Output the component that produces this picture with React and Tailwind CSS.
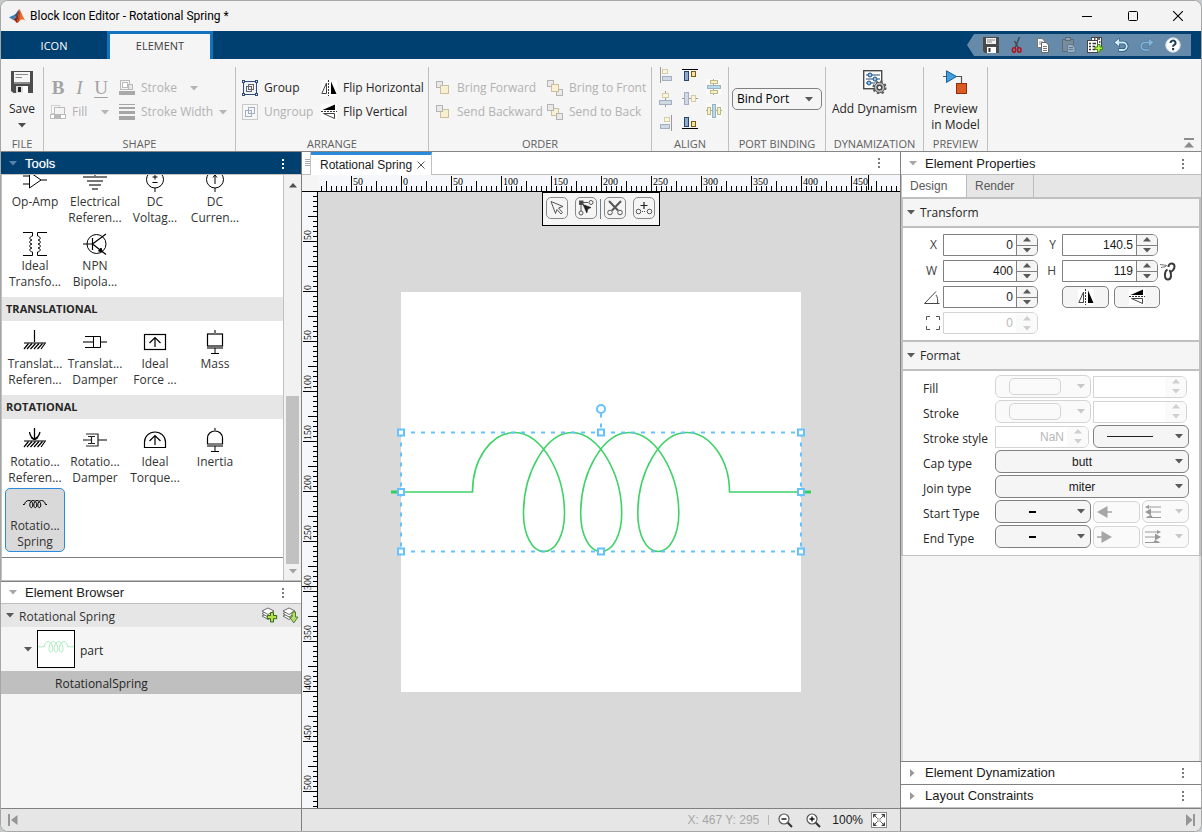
import React, { useLayoutEffect, useRef, useState } from "react";

const SEGOE = "font-['Open_Sans','Noto_Sans',sans-serif]";
const ARIAL = "font-['Liberation_Sans',Arial,sans-serif]";

/* ---------- small shared pieces ---------- */

function Tri({ dir = "down", className = "text-[#595959]" }) {
  const d = {
    down: "M0 0H8L4 4.5Z",
    up: "M0 4.5H8L4 0Z",
    right: "M0 0L4.5 4L0 8Z",
  }[dir];
  const box = dir === "right" ? { w: 5, h: 8 } : { w: 8, h: 5 };
  return (
    <svg width={box.w} height={box.h} className={`shrink-0 ${className}`} aria-hidden="true">
      <path d={d} fill="currentColor" />
    </svg>
  );
}

function Dots({ className = "text-[#7a7a7a]", label }) {
  return (
    <button type="button" aria-label={label} className={`flex h-4 w-4 items-center justify-center ${className}`}>
      <svg width="2" height="10" fill="currentColor" aria-hidden="true">
        <rect width="2" height="2" />
        <rect y="4" width="2" height="2" />
        <rect y="8" width="2" height="2" />
      </svg>
    </button>
  );
}

function FlipH({ size = 16 }) {
  return (
    <svg width={size} height={size} viewBox="0 0 16 16" aria-hidden="true">
      <rect width="16" height="16" fill="#fff" />
      <path d="M5.5 3V13.5H0.8Z" fill="#fff" stroke="#444" />
      <path d="M7.5 0V16" stroke="#333" strokeDasharray="2 1" />
      <path d="M10 1.5V14H15.5Z" fill="#000" />
    </svg>
  );
}

function FlipV({ size = 16 }) {
  return (
    <svg width={size} height={size} viewBox="0 0 16 16" aria-hidden="true">
      <rect width="16" height="16" fill="#fff" />
      <path d="M14 0.5V6H1.5Z" fill="#000" />
      <path d="M0 7.5H16" stroke="#333" strokeDasharray="2 1" />
      <path d="M13.500 9.500V14.500L2.500 9.500Z" fill="#fff" stroke="#444" />
    </svg>
  );
}

/* ---------- title bar ---------- */

function TitleBar() {
  return (
    <header className="flex h-[30px] shrink-0 items-center bg-[#f3f3f3] pl-[8px] pr-px">
      <svg width="17" height="16" viewBox="0 0 17 16" aria-hidden="true">
        <path d="M0 9.2L5 7L7.2 9.2L4.2 12Z" fill="#3f7fb5" />
        <path d="M5 7C7 6.4 8 4 9.6 1.5L8.4 8.6L7.2 9.2Z" fill="#27598f" />
        <path d="M4.2 12L7.2 9.2C8.6 7 9.4 2.6 10.2 1C10.4 4 9.4 11 7.6 15C6.6 13 5.6 12 4.2 12Z" fill="#8c2516" />
        <path d="M10.2 1C12 2.4 13.6 9 16.4 12.8C14 11 12 11.4 10.6 13C9.6 14.2 8.6 15 7.6 15C9.6 11 10 5 10.2 1Z" fill="#e5702a" />
        <path d="M10.2 1C10.9 4 11.2 8 10.2 12.6C9.4 14 8.4 15 7.6 15C9.6 11 10 5 10.2 1Z" fill="#c13c1a" />
      </svg>
      <h1 className="ml-[4px] flex-1 font-[Roboto,sans-serif] text-[12px] leading-4 text-black">Block Icon Editor - Rotational Spring *</h1>
      <div className="flex">
        <button type="button" aria-label="Minimize" className="flex h-[30px] w-[46px] items-center justify-center">
          <svg width="10" height="10"><path d="M0 5.500H10" stroke="#000" /></svg>
        </button>
        <button type="button" aria-label="Maximize" className="flex h-[30px] w-[45px] items-center justify-center">
          <svg width="10" height="10"><rect x=".5" y=".5" width="9" height="9" rx="1" fill="none" stroke="#000" /></svg>
        </button>
        <button type="button" aria-label="Close" className="flex h-[30px] w-[45px] items-center justify-center">
          <svg width="10" height="10"><path d="M0 0L10 10M10 0L0 10" stroke="#000" strokeWidth="1.1" /></svg>
        </button>
      </div>
    </header>
  );
}

/* ---------- tab strip with quick access ---------- */

const QUICK = [
  ["Save", (
    <svg width="16" height="16" viewBox="0 0 16 16">
      <path d="M0 0H16V16H2L0 14Z" fill="#4a4a4a" />
      <rect x="3" y="1" width="10" height="6" fill="#f2f2f2" />
      <path d="M4 3H12M4 5H9" stroke="#888" />
      <rect x="4" y="10" width="9" height="6" fill="#fff" />
      <rect x="5.500" y="11" width="2" height="4" fill="#333" />
    </svg>
  )],
  ["Cut", (
    <svg width="16" height="16" viewBox="0 0 16 16">
      <path d="M10.500 0L6 11M5.500 4L9.500 11" stroke="#3f4c56" strokeWidth="1.500" />
      <ellipse cx="5" cy="13" rx="1.700" ry="2.200" fill="none" stroke="#b3121d" strokeWidth="1.500" />
      <ellipse cx="10.300" cy="13" rx="1.700" ry="2.200" fill="none" stroke="#b3121d" strokeWidth="1.500" />
    </svg>
  )],
  ["Copy", (
    <svg width="16" height="16" viewBox="0 0 16 16">
      <path d="M2.500 1.500H7L9.500 4V10.500H2.500Z" fill="#fff" stroke="#777" />
      <path d="M4 5H8M4 7H8" stroke="#8a8a8a" />
      <path d="M6.500 5.500H11L13.500 8V15.500H6.500Z" fill="#fff" stroke="#666" />
      <path d="M8 9.500H12M8 11.500H12M8 13.500H12" stroke="#777" />
    </svg>
  )],
  ["Paste", (
    <svg width="16" height="16" viewBox="0 0 16 16" opacity=".75">
      <rect x="1.500" y="2.500" width="11" height="12" fill="#7f8d97" stroke="#56636d" />
      <rect x="4.500" y=".5" width="5" height="3" fill="#9fabb4" stroke="#56636d" />
      <path d="M6.500 7.500H11L14 10V15.500H6.500Z" fill="#a9bccc" stroke="#5f7486" />
      <path d="M8 10.500H12M8 12.500H12" stroke="#5f7486" />
    </svg>
  )],
  ["Customize quick access", (
    <svg width="16" height="16" viewBox="0 0 16 16">
      <rect x="4.500" y=".5" width="10" height="11" fill="#fff" stroke="#444" />
      <rect x=".5" y="3.500" width="10" height="12" fill="#fff" stroke="#444" />
      <path d="M2 6.500H4M5.500 6.500H9M2 9.500H4M5.500 9.500H8M2 12.500H4M5.500 12.500H8M7 2H8.500M10 2H13M12 5H13.500" stroke="#333" strokeWidth="1.500" />
      <path d="M10.500 7.500H13V10H15.500V12.500H13V15H10.500V12.500H8V10H10.500Z" fill="#b8ef3c" stroke="#3d8a12" />
    </svg>
  )],
  ["Undo", (
    <svg width="16" height="16" viewBox="0 0 16 16">
      <path d="M3 5.500H10A3.700 3.700 0 0 1 10 13H5.500" fill="none" stroke="#27577d" strokeWidth="3.500" />
      <path d="M6.500 1L1 5.500L6.500 10Z" fill="#d5ecfb" stroke="#27577d" strokeWidth=".7" />
      <path d="M4 5.500H10A3.700 3.700 0 0 1 10 13H6" fill="none" stroke="#cfe8fa" strokeWidth="1.800" />
    </svg>
  )],
  ["Redo", (
    <svg width="16" height="16" viewBox="0 0 16 16">
      <path d="M12 5.500H6A3.700 3.700 0 0 0 6 13H10" fill="none" stroke="#4a7ba3" strokeWidth="3" />
      <path d="M9.500 1L15 5.500L9.500 10Z" fill="#86b5d6" stroke="#4a7ba3" strokeWidth=".7" />
      <path d="M12 5.500H6A3.700 3.700 0 0 0 6 13H10" fill="none" stroke="#86b5d6" strokeWidth="1.600" />
    </svg>
  )],
  ["Help", (
    <svg width="16" height="16" viewBox="0 0 16 16">
      <circle cx="8" cy="8" r="7.600" fill="#fff" />
      <circle cx="8" cy="8" r="7.200" fill="none" stroke="#b9c6d0" strokeWidth=".8" />
      <path d="M5.500 6A2.500 2.300 0 1 1 9.200 7.900C8.300 8.400 8 8.800 8 9.800" fill="none" stroke="#1c3f5c" strokeWidth="2" />
      <rect x="7" y="11" width="2.200" height="2.200" fill="#1c3f5c" />
    </svg>
  )],
];

function TabStrip() {
  return (
    <nav className="flex h-[28px] shrink-0 bg-[#004071] text-[11px]">
      <button type="button" className="w-[106px] pt-[2px] text-white">ICON</button>
      <button type="button" className="w-[106px] border-x-3 border-t-3 border-[#1272bd] bg-[#f5f5f5] text-[#404040]">ELEMENT</button>
      <div className="ml-auto mr-[10px] mt-[3px] flex h-[22px] items-center gap-[10px] bg-[#668aaa] pl-[16px] pr-[10px] [clip-path:polygon(7px_0,100%_0,100%_100%,7px_100%,0_50%)]">
        {QUICK.map(([name, icon]) => (
          <button key={name} type="button" aria-label={name} className="h-4 w-4">{icon}</button>
        ))}
      </div>
    </nav>
  );
}

/* ---------- ribbon ---------- */

function Section({ title, children, className = "" }) {
  return (
    <section className={`mt-[8px] flex shrink-0 flex-col border-r border-[#bfbfbf] ${className}`}>
      <div className="flex flex-1 items-start">{children}</div>
      <h2 className="h-[16px] text-center text-[11px] leading-[18px] text-[#616161]">{title}</h2>
    </section>
  );
}

function IconButton({ icon, label, disabled, arrow, className = "" }) {
  return (
    <button
      type="button"
      disabled={disabled}
      className={`flex h-6 items-center gap-[6px] whitespace-nowrap text-[12px] leading-4 ${disabled ? "text-[#b2b2b2]" : "text-[#262626]"} ${className}`}
    >
      <span className="flex w-4 shrink-0 justify-center">{icon}</span>
      <span>{label}</span>
      {arrow && <Tri className="ml-auto text-[#b5b5b5]" />}
    </button>
  );
}

const strokeIcon = (
  <svg width="16" height="16" viewBox="0 0 16 16">
    <rect x="1.500" y=".5" width="9" height="9" fill="#f4f4f4" stroke="#bbb" />
    <rect x="3.500" y="2.500" width="5" height="5" fill="#fff" stroke="#bbb" />
    <rect x="9.500" y="4.500" width="4" height="5" fill="#e6e6e6" stroke="#bbb" />
    <rect x="0" y="11" width="16" height="4" fill="#a9a9a9" />
  </svg>
);
const fillIcon = (
  <svg width="16" height="16" viewBox="0 0 16 16">
    <rect x="1.500" y="1.500" width="8" height="8" fill="#fafafa" stroke="#d0d0d0" />
    <rect x="4.500" y="3.500" width="10" height="7" fill="#f4f4f4" stroke="#bbb" />
    <rect x=".5" y="10.500" width="15" height="4" fill="#fff" stroke="#bbb" />
    <rect x="4" y="11" width="7" height="3" fill="#b8b8b8" />
  </svg>
);
const widthIcon = (
  <svg width="16" height="16" viewBox="0 0 16 16" fill="#a6a6a6">
    <rect y="0" width="16" height="1" /><rect y="3" width="16" height="2" />
    <rect y="7" width="16" height="3" /><rect y="12" width="16" height="4" />
  </svg>
);
const groupIcon = (
  <svg width="16" height="16" viewBox="0 0 16 16" fill="none">
    <rect x="1.500" y="1.500" width="13" height="13" fill="#eef1f5" stroke="#2f4b76" />
    <g fill="#fff" stroke="#2f4b76">
      <rect x=".5" y=".5" width="2" height="2" /><rect x="13.500" y=".5" width="2" height="2" />
      <rect x=".5" y="13.500" width="2" height="2" /><rect x="13.500" y="13.500" width="2" height="2" />
    </g>
    <rect x="4.500" y="6.500" width="5" height="5" stroke="#666" />
    <rect x="6.500" y="4.500" width="5" height="5" stroke="#666" />
  </svg>
);
const ungroupIcon = (
  <svg width="16" height="16" viewBox="0 0 16 16" fill="none">
    <rect x=".5" y=".5" width="15" height="15" fill="#f6f6f6" stroke="#c9c9c9" />
    <rect x="3.500" y="6.500" width="6" height="6" stroke="#9fb0c6" />
    <rect x="6.500" y="3.500" width="6" height="6" stroke="#9fb0c6" />
  </svg>
);

function Gray({ x, y, s = 6 }) {
  return <rect x={x} y={y} width={s} height={s} fill="#e9e9e9" stroke="#b4b4b4" />;
}
function Yellow({ x, y, s = 8 }) {
  return <rect x={x} y={y} width={s} height={s} fill="#f8f0d3" stroke="#cdbf9c" />;
}
const forwardIcon = <svg width="14" height="14"><Gray x=".5" y=".5" /><Yellow x="4.500" y="4.500" /></svg>;
const backwardIcon = <svg width="14" height="14"><Yellow x="4.500" y="4.500" /><Gray x=".5" y=".5" /></svg>;
const frontIcon = <svg width="16" height="16"><Gray x=".5" y=".5" /><Gray x="9.500" y="9.500" /><Yellow x="4.500" y="4.500" s={7} /></svg>;
const backIcon = <svg width="16" height="16"><Yellow x="4.500" y="4.500" s={7} /><Gray x=".5" y=".5" /><Gray x="9.500" y="9.500" /></svg>;

const pale = { y: "#fbf5df", ys: "#d6cba6", b: "#cfd9e4", bs: "#a2afc2", l: "#9a9a9a" };
const bold = { y: "#f6e3a8", ys: "#7a5d10", b: "#8fabc9", bs: "#22466f", l: "#000" };

const ALIGN = [
  ["Align left", (
    <svg width="16" height="16"><path d="M1.500 0V16" stroke={pale.l} />
      <rect x="3.500" y="2.500" width="5" height="4" fill={pale.y} stroke={pale.ys} />
      <rect x="3.500" y="9.500" width="9" height="4" fill={pale.b} stroke={pale.bs} /></svg>
  )],
  ["Align center", (
    <svg width="16" height="16"><path d="M6.500 0V16" stroke={pale.l} />
      <rect x="3.500" y="2.500" width="6" height="4" fill={pale.y} stroke={pale.ys} />
      <rect x=".5" y="9.500" width="12" height="4" fill={pale.b} stroke={pale.bs} /></svg>
  )],
  ["Align right", (
    <svg width="16" height="16"><path d="M12.500 0V16" stroke={pale.l} />
      <rect x="5.500" y="2.500" width="5" height="4" fill={pale.y} stroke={pale.ys} />
      <rect x="1.500" y="9.500" width="9" height="4" fill={pale.b} stroke={pale.bs} /></svg>
  )],
  ["Align top", (
    <svg width="16" height="16"><path d="M0 2.500H16" stroke={bold.l} />
      <rect x="2.500" y="4.500" width="4" height="9" fill={bold.b} stroke={bold.bs} />
      <rect x="9.500" y="4.500" width="4" height="5" fill={bold.y} stroke={bold.ys} /></svg>
  )],
  ["Align middle", (
    <svg width="16" height="16"><path d="M0 7.500H16" stroke={pale.l} />
      <rect x="2.500" y="1.500" width="4" height="12" fill={pale.b} stroke={pale.bs} />
      <rect x="9.500" y="4.500" width="4" height="6" fill={pale.y} stroke={pale.ys} /></svg>
  )],
  ["Align bottom", (
    <svg width="16" height="16"><path d="M0 13.500H16" stroke={bold.l} />
      <rect x="2.500" y="2.500" width="4" height="9" fill={bold.b} stroke={bold.bs} />
      <rect x="9.500" y="6.500" width="4" height="5" fill={bold.y} stroke={bold.ys} /></svg>
  )],
  ["Distribute vertically", (
    <svg width="16" height="16"><rect width="16" height="16" fill="#fafafa" /><path d="M7.500 0V16" stroke="#a8a8a8" />
      <rect x="4.500" y="1.500" width="7" height="3" fill="#f7f3c0" stroke="#bdb88a" />
      <rect x="1.500" y="6.500" width="13" height="3" fill="#b5dcee" stroke="#9bb2be" />
      <rect x="4.500" y="11.500" width="7" height="3" fill="#f7f3c0" stroke="#bdb88a" /></svg>
  )],
  ["Distribute horizontally", (
    <svg width="16" height="16"><rect width="16" height="16" fill="#fafafa" /><path d="M0 7.500H16" stroke="#a8a8a8" />
      <rect x="1.500" y="4.500" width="3" height="7" fill="#f7f3c0" stroke="#bdb88a" />
      <rect x="6.500" y="1.500" width="3" height="13" fill="#b5dcee" stroke="#9bb2be" />
      <rect x="11.500" y="4.500" width="3" height="7" fill="#f7f3c0" stroke="#bdb88a" /></svg>
  )],
];

function AlignColumn({ items, className = "" }) {
  return (
    <div className={`flex flex-col gap-2 ${className}`}>
      {items.map(([name, icon]) => (
        <button key={name} type="button" aria-label={name} className="flex h-4 w-4 items-start">{icon}</button>
      ))}
    </div>
  );
}

function Ribbon() {
  return (
    <div className="flex h-[93px] shrink-0 border-b border-[#868686] bg-[#f5f5f5]">
      <Section title="FILE" className="w-[43px]">
        <button type="button" className="flex w-full flex-col items-center text-[12px] leading-4 text-[#262626]">
          <svg width="22" height="22" viewBox="0 0 22 22" className="mt-[4px]" aria-hidden="true">
            <path d="M0 0H22V22H2.500L0 20Z" fill="#4d4d4d" />
            <rect x="3" y="1" width="16" height="10" fill="#f6f6f6" />
            <path d="M4.500 3.500H17M4.500 6.500H11" stroke="#8a8a8a" />
            <rect x="3" y="11" width="16" height="2" fill="#8b8b8b" />
            <rect x="5" y="15" width="12" height="7" fill="#ddd" />
            <rect x="12" y="15" width="5" height="7" fill="#fff" />
            <rect x="7" y="16" width="3" height="5" fill="#222" />
          </svg>
          <span className="mt-[8px]">Save</span>
          <Tri className="mt-[6px] text-[#4d4d4d]" />
        </button>
      </Section>

      <Section title="SHAPE" className="w-[192px]">
        <div className="ml-[6px] mt-[9px] w-[59px]">
          <div className="flex h-6 items-center justify-between font-['Liberation_Serif',serif] text-[19px] leading-5 text-[#a3a3a3]">
            <button type="button" disabled className="w-4 font-bold">B</button>
            <button type="button" disabled className="w-4 italic">I</button>
            <button type="button" disabled className="w-4 underline underline-offset-3">U</button>
          </div>
          <IconButton icon={fillIcon} label="Fill" disabled arrow className="w-full" />
        </div>
        <div className="ml-[10px] mt-[9px] w-[108px]">
          <IconButton icon={strokeIcon} label="Stroke" disabled arrow className="w-[79px]" />
          <IconButton icon={widthIcon} label="Stroke Width" disabled arrow className="w-full" />
        </div>
      </Section>

      <Section title="ARRANGE" className="w-[193px]">
        <div className="ml-[6px] mt-[9px] w-[79px]">
          <IconButton icon={groupIcon} label="Group" />
          <IconButton icon={ungroupIcon} label="Ungroup" disabled />
        </div>
        <div className="mt-[9px]">
          <IconButton icon={<FlipH />} label="Flip Horizontal" />
          <IconButton icon={<FlipV />} label="Flip Vertical" />
        </div>
      </Section>

      <Section title="ORDER" className="w-[223px]">
        <div className="ml-[6px] mt-[9px] w-[112px]">
          <IconButton icon={forwardIcon} label="Bring Forward" disabled />
          <IconButton icon={backwardIcon} label="Send Backward" disabled />
        </div>
        <div className="mt-[9px]">
          <IconButton icon={frontIcon} label="Bring to Front" disabled />
          <IconButton icon={backIcon} label="Send to Back" disabled />
        </div>
      </Section>

      <Section title="ALIGN" className="w-[77px]">
        <AlignColumn items={ALIGN.slice(0, 3)} className="ml-[7px]" />
        <AlignColumn items={ALIGN.slice(3, 6)} className="ml-[7px]" />
        <AlignColumn items={ALIGN.slice(6)} className="ml-[8px] mt-[12px]" />
      </Section>

      <Section title="PORT BINDING" className="w-[97px]">
        <div className="relative mx-[3px] mt-[21px] flex w-full">
          <select aria-label="Port binding" className="h-[22px] w-full appearance-none rounded-[5px] border border-[#808080] bg-[#f5f5f5] pl-[4px] text-[12px] leading-4 text-black">
            <option>Bind Port</option>
          </select>
          <span className="pointer-events-none absolute right-[9px] top-[9px] flex"><Tri /></span>
        </div>
      </Section>

      <Section title="DYNAMIZATION" className="w-[98px]">
        <button type="button" className="flex w-full flex-col items-center whitespace-nowrap text-[12px] leading-4 text-[#262626]">
          <svg width="24" height="24" viewBox="0 0 24 24" className="mt-[3px]" aria-hidden="true">
            <rect x=".7" y=".7" width="18" height="18" fill="#fff" stroke="#4a4a4a" strokeWidth="1.400" />
            <path d="M3 5H17M3 9H17M3 13H12" stroke="#27486f" strokeWidth="1.200" />
            <g fill="#8fc4f2" stroke="#1f4f86">
              <circle cx="7" cy="5" r="2" /><circle cx="12" cy="9" r="2" /><circle cx="6" cy="13" r="2" />
            </g>
            <g transform="translate(16.500 17.500)">
              <circle r="5.200" fill="#b5b5b5" stroke="#5e5e5e" />
              <circle r="6" fill="none" stroke="#5e5e5e" strokeWidth="2.200" strokeDasharray="2.400 2.310" />
              <circle r="2.300" fill="#fff" stroke="#444" strokeWidth="1.400" />
            </g>
          </svg>
          <span className="mt-[7px]">Add Dynamism</span>
        </button>
      </Section>

      <Section title="PREVIEW" className="w-[64px]">
        <button type="button" className="flex w-full flex-col items-center whitespace-nowrap text-[12px] leading-4 text-[#262626]">
          <svg width="26" height="24" viewBox="0 0 26 24" className="mt-[3px]" aria-hidden="true">
            <path d="M0 6.500H4M12 6.500H18.500V13" fill="none" stroke="#555" strokeWidth="1.200" />
            <path d="M3.500 .8L13.500 6.500L3.500 12.500Z" fill="#3f9fdc" stroke="#1c5c92" />
            <rect x="13.500" y="13.500" width="10" height="10" fill="#dd5a24" stroke="#8f2f0c" />
          </svg>
          <span className="mt-[7px]">Preview<br />in Model</span>
        </button>
      </Section>

      <button type="button" aria-label="Collapse ribbon" className="mb-[3px] ml-auto mr-[7px] self-end">
        <svg width="10" height="10"><path d="M0 0H10V2H0ZM5 4L10 9.500H0Z" fill="#8c8c8c" /></svg>
      </button>
    </div>
  );
}

/* ---------- tools palette ---------- */

const G = ({ children, ...p }) => (
  <svg width="24" height="24" viewBox="0 0 24 24" fill="none" stroke="#000" aria-hidden="true" {...p}>{children}</svg>
);

const opAmp = <G><path d="M6.500 4V20L18 12Z M0 8H6.500M0 16H6.500M18 12H24" /></G>;
const ground = <G><path d="M12 0V9" /><path d="M0 9H24M4 13H20M6 17H18M9 21H15" stroke="#777" strokeWidth="2" /></G>;
const dcV = <G><circle cx="12" cy="11.500" r="8.500" /><path d="M12 0V3M12 20V24M9.500 9H14.500M12 6.500V11.500M9.500 14.500H14.500" /></G>;
const dcI = <G><circle cx="12" cy="11.500" r="8.500" /><path d="M12 0V3M12 20V24M12 16V7.500M10 9.500L12 7L14 9.500" /></G>;
const transformer = (
  <G>
    <path d="M0 .5H9.500V4C6 4.500 6 8 9 8C6 8.500 6 12 9 12C6 12.500 6 16 9 16C6 16.500 6 19.500 9.500 20V23.500H0" />
    <path d="M24 .5H14.500V4C18 4.500 18 8 15 8C18 8.500 18 12 15 12C18 12.500 18 16 15 16C18 16.500 18 19.500 14.500 20V23.500H24" />
  </G>
);
const npn = <G><circle cx="13.500" cy="12" r="9.500" /><path d="M0 12H9M9.500 6V18M9.500 12L23 2M9.500 12L23 22.500" strokeWidth="1.200" /><path d="M15.500 19L19.500 20L18 16Z" fill="#000" /></G>;
const hatch = "M5.500 13.500L1 19M9 13.500L4 19M12.500 13.500L7.500 19M16 13.500L11 19M19.500 13.500L14.500 19M22 13.500L18 19";
const transRef = <G><path d="M11.500 0V12.500" strokeWidth="1.200" /><path d="M1 13H23" stroke="#777" strokeWidth="2" /><path d={hatch} strokeWidth="1.200" /></G>;
const transDamper = <G><path d="M0 12H10M18 12H24" stroke="#777" strokeWidth="2" /><path d="M2 6.500H17.500V17.500H2M10.500 7V17" /></G>;
const force = <G><rect x="1.500" y="4.500" width="21" height="15" strokeWidth="1.200" /><path d="M12 17V8.500M6.500 13L12 7.500L17.500 13" strokeWidth="1.200" /></G>;
const mass = <G><rect x="4.500" y="4" width="15" height="12" strokeWidth="1.200" /><path d="M12 0V4M4 18H20" stroke="#777" strokeWidth="2" /><path d="M12 18V23.500M8 23.500H16" /></G>;
const rotRef = <G><path d="M11.500 0V12M6.500 4C7 8 9 10 11.500 11C14 10 16 8 17 4M8 9.500L11.500 12L15 9.500" strokeWidth="1.300" /><path d="M1 13H23" stroke="#777" strokeWidth="2" /><path d={hatch} strokeWidth="1.200" /></G>;
const rotDamper = <G><path d="M0 12H4M15 12H24" stroke="#555" strokeWidth="1.600" /><path d="M3 6H15V18H3M4 12H9M5 8.500H12M5 15.500H12M8.500 8.500V15.500" strokeWidth="1.200" stroke="#222" /></G>;
const torque = <G><path d="M1.500 19.500V14A10.500 10 0 0 1 22.500 14V19.500Z" strokeWidth="1.200" /><path d="M12 17V8.500M6.500 13L12 7.500L17.500 13" strokeWidth="1.200" /></G>;
const inertia = <G><path d="M4.500 16V10A7.500 7 0 0 1 19.500 10V16Z" strokeWidth="1.200" /><path d="M12 0V3M4 18H20" stroke="#777" strokeWidth="2" /><path d="M12 18V23.500M8 23.500H16" /></G>;

/* Four coil arcs joined by three narrow return loops. */
const COIL =
  "M0 59.5H71.5C71.500 27 90 0 114 0" +
  "C140 0 163.500 40 163.500 81C163.500 102 155 119 142.800 119C131 119 122.500 102 122.500 81C122.500 40 145 0 171.200 0" +
  "C197 0 220.700 40 220.700 81C220.700 102 212 119 200 119C188 119 179.700 102 179.700 81C179.700 40 202 0 228.400 0" +
  "C254 0 277.800 40 277.800 81C277.800 102 269 119 257.200 119C245 119 236.800 102 236.800 81C236.800 40 259 0 285.600 0" +
  "C309 0 328.500 27 328.500 59.500H400";

const spring = (
  <svg width="24" height="24" viewBox="0 0 24 24" fill="none" stroke="#000" strokeWidth="1" aria-hidden="true">
    <path d="M0 12.500H1.500C2 10 3.500 8.500 6 8.500C8.500 8.500 9.800 10.500 9.800 13C9.800 16.500 6.800 16.500 6.800 13C6.800 10.500 8 8.500 10 8.500C12 8.500 13.800 10.500 13.800 13C13.800 16.500 10.800 16.500 10.800 13C10.800 10.500 12 8.500 14 8.500C16 8.500 17.800 10.500 17.800 13C17.800 16.500 14.800 16.500 14.800 13C14.800 10.500 16 8.500 18.500 8.500C20.500 8.500 22 10 22.500 12.500H24" />
  </svg>
);

const GROUPS = [
  { title: null, items: [
    [opAmp, "Op-Amp"], [ground, "Electrical", "Referen..."], [dcV, "DC", "Voltag..."], [dcI, "DC", "Curren..."],
    [transformer, "Ideal", "Transfo..."], [npn, "NPN", "Bipola..."],
  ] },
  { title: "TRANSLATIONAL", items: [
    [transRef, "Translat...", "Referen..."], [transDamper, "Translat...", "Damper"], [force, "Ideal", "Force ..."], [mass, "Mass"],
  ] },
  { title: "ROTATIONAL", items: [
    [rotRef, "Rotatio...", "Referen..."], [rotDamper, "Rotatio...", "Damper"], [torque, "Ideal", "Torque..."], [inertia, "Inertia"],
    [spring, "Rotatio...", "Spring"],
  ] },
];

function ToolsPanel() {
  return (
    <section className="flex min-h-0 flex-1 flex-col">
      <header className="flex h-[23px] shrink-0 items-center border-b border-[#c4c4c4] bg-[#004071] pl-[8px] pr-[10px] pt-px">
        <Tri className="text-[#5b83a6]" />
        <h2 className={`ml-[8px] flex-1 text-[13px] leading-4 text-white ${ARIAL} [text-shadow:0_0_1px_#ffffff80]`}>Tools</h2>
        <Dots label="Tools menu" className="text-white" />
      </header>
      <div className="flex min-h-0 flex-1 border-b border-[#c0c0c0] bg-white">
        <div className="flex min-h-0 flex-1 flex-col justify-end overflow-hidden border-x border-[#c0c0c0] pb-[22px]">
          <div className="border-b border-[#808080]">
            {GROUPS.map((g) => (
              <div key={g.title || "ELECTRICAL"}>
                {g.title && (
                  <h3 className="h-6 bg-[#e6e6e6] pl-[4px] text-[11px] font-bold leading-6 text-[#262626]">{g.title}</h3>
                )}
                <div className="grid grid-cols-[repeat(auto-fill,60px)] px-[3px] py-[5px]">
                  {g.items.map(([icon, a, b]) => {
                    const on = icon === spring;
                    return (
                      <button
                        key={a + b}
                        type="button"
                        aria-pressed={on}
                        className={`flex h-16 flex-col items-center rounded-[5px] border pt-[3px] text-[12px] leading-4 text-[#333] ${on ? "border-[#2a8adb] bg-[#d9d9d9]" : "border-transparent"}`}
                      >
                        {icon}
                        <span className="mt-[2px] whitespace-nowrap">{a}</span>
                        {b && <span className="whitespace-nowrap">{b}</span>}
                      </button>
                    );
                  })}
                </div>
              </div>
            ))}
          </div>
        </div>
        <div className="flex w-[17px] shrink-0 flex-col items-center bg-[#f1f1f1] pb-[6px] pt-[8px]">
          <Tri dir="up" className="text-[#505050]" />
          <div className="mt-auto h-[168px] w-[13px] bg-[#c1c1c1]" />
          <Tri className="mt-[5px] text-[#a3a3a3]" />
        </div>
      </div>
    </section>
  );
}

/* ---------- element browser ---------- */

function Layers({ down }) {
  return (
    <svg width="17" height="17" viewBox="0 0 17 17" aria-hidden="true">
      <g fill="#fff" stroke="#5c5c5c" strokeWidth=".9">
        <path d="M1 9L7 6L13 9L7 12.500Z" /><path d="M1 6.500L7 3.500L13 6.500L7 10Z" /><path d="M1 4L7 1L13 4L7 7.500Z" />
      </g>
      {down ? (
        <path d="M10 5H13.500V10H16L11.800 15.800L7.500 10H10Z" fill="#b6dd73" stroke="#43701b" strokeWidth=".9" />
      ) : (
        <path d="M9.500 5.500H12.500V8.500H15.700V11.700H12.500V15H9.500V11.700H6.300V8.500H9.500Z" fill="#b5e04a" stroke="#2e6a12" strokeWidth="1" />
      )}
    </svg>
  );
}

function ElementBrowser() {
  return (
    <section className="flex h-[227px] shrink-0 flex-col border-t border-[#808080] bg-[#f5f5f5]">
      <header className="flex h-[22px] items-center border-b border-[#bdbdbd] bg-white pl-[8px] pr-[10px]">
        <Tri className="text-[#a6a6a6]" />
        <h2 className={`ml-[8px] flex-1 text-[13px] leading-4 text-[#1a1a1a] ${ARIAL}`}>Element Browser</h2>
        <Dots label="Element Browser menu" />
      </header>
      <div className="flex h-[23px] items-center bg-[#e6e6e6] pl-[5px] pr-[2px]">
        <Tri />
        <span className="ml-[5px] flex-1 pt-[3px] text-[12px] leading-4 text-[#333]">Rotational Spring</span>
        <button type="button" aria-label="Add layer" className="mr-[4px] h-[17px] w-[17px]"><Layers /></button>
        <button type="button" aria-label="Insert layer" className="h-[17px] w-[17px]"><Layers down /></button>
      </div>
      <div className="flex h-[44px] items-center pl-[23px]">
        <Tri />
        <span className="ml-[5px] flex h-[38px] w-[38px] items-center justify-center border border-black bg-white">
          <svg width="36" height="16" viewBox="0 -6 400 180" preserveAspectRatio="none" aria-hidden="true">
            <path d={COIL} fill="none" stroke="#a2e8b7" strokeWidth="10" />
          </svg>
        </span>
        <span className="ml-[5px] pt-[3px] text-[12px] leading-4 text-[#262626]">part</span>
      </div>
      <div className="flex h-[23px] items-center bg-[#bfbfbf] pl-[54px] pt-[3px] text-[12px] leading-4 text-[#262626]">RotationalSpring</div>
    </section>
  );
}

/* ---------- drawing area ---------- */

/* Pixel size of an element, kept current so the rulers only draw what fits. */
function useSize(initial) {
  const ref = useRef(null);
  const [size, setSize] = useState(initial);
  useLayoutEffect(() => {
    const measure = () => {
      const r = ref.current.getBoundingClientRect();
      setSize({ w: r.width, h: r.height });
    };
    measure();
    window.addEventListener("resize", measure);
    return () => window.removeEventListener("resize", measure);
  }, []);
  return [ref, size];
}

function steps(from, to, by) {
  const out = [];
  for (let v = from; v <= to; v += by) out.push(v);
  return out;
}

const tickLength = (v) => (v % 50 === 0 ? 15 : v % 25 === 0 ? 10 : 5);

function HRuler() {
  const [ref, { w }] = useSize({ w: 582, h: 17 });
  return (
    <svg ref={ref} className="h-[17px] w-0 flex-1 bg-[#f5f7fa]" aria-hidden="true">
      {steps(-80, w - 84, 5).map((v) => (
        <rect key={v} x={83 + v} y={16 - tickLength(v)} width="1" height={tickLength(v)} />
      ))}
      {steps(-50, w - 102, 50).map((v) => (
        <text key={v} x={85 + v} y="10" fontSize="10" className="font-['Liberation_Serif',serif]">{Math.abs(v)}</text>
      ))}
      <rect x="550" y="0" width="1" height="15" />
      <rect x="0" y="16" width="100%" height="1" />
    </svg>
  );
}

function VRuler() {
  const [ref, { h }] = useSize({ w: 16, h: 616 });
  return (
    <svg ref={ref} className="w-[16px] shrink-0 self-stretch bg-[#f5f7fa]" aria-hidden="true">
      {steps(-95, h - 100, 5).map((v) => (
        <rect key={v} x={16 - tickLength(v)} y={99 + v} width={tickLength(v)} height="1" />
      ))}
      {steps(-50, h - 100, 50).map((v) => (
        <text key={v} transform={`translate(9 ${98 + v}) rotate(-90)`} fontSize="10" className="font-['Liberation_Serif',serif]">
          {Math.abs(v)}
        </text>
      ))}
      <rect x="0" y="394" width="16" height="1" />
      <rect x="15" y="0" width="1" height="100%" />
    </svg>
  );
}

function CanvasTool({ label, children }) {
  return (
    <button type="button" aria-label={label} className="flex h-[22px] w-[22px] items-center justify-center rounded-[5px] border border-[#8a8a8a] bg-[#f5f5f5]">
      <svg width="18" height="18" viewBox="0 0 18 18" fill="none" stroke="#555" aria-hidden="true">{children}</svg>
    </button>
  );
}

const HANDLES = [[0, 0], [200, 0], [400, 0], [0, 59.5], [400, 59.5], [0, 119], [200, 119], [400, 119]];

function Canvas() {
  return (
    <section className="flex min-w-0 flex-1 flex-col border-r border-[#808080]">
      <div className="flex h-[23px] shrink-0 border-b border-[#bdbdbd] bg-white">
        <div className="flex w-[9px] items-center justify-end border-r border-[#c4c4c4]">
          <svg width="5" height="8"><path d="M0 .5H5M0 2.500H5M0 4.500H5M0 6.500H5" stroke="#aaa" /></svg>
        </div>
        <div className={`flex h-[23px] items-center border-t-3 border-r border-r-[#c0c0c0] border-t-[#2a8adb] bg-white pl-[9px] pr-[6px] ${ARIAL}`}>
          <span className="text-[12px] leading-4 text-[#1a1a1a]">Rotational Spring</span>
          <button type="button" aria-label="Close tab" className="ml-[5px]">
            <svg width="8" height="8"><path d="M.5 .5L7.500 7.500M7.500 .5L.5 7.500" stroke="#555" /></svg>
          </button>
        </div>
        <div className="ml-auto mr-[13px] flex items-center"><Dots label="Document menu" /></div>
      </div>
      <div className="flex h-[17px] shrink-0">
        <div className="w-[16px] shrink-0 border-b border-black bg-[#f5f5f5]" />
        <HRuler />
      </div>
      <div className="flex min-h-0 flex-1">
        <VRuler />
        <div className="relative min-w-0 flex-1 overflow-hidden bg-[#d9d9d9]">
          <div className="absolute left-[83px] top-[100px] h-[400px] w-[400px] bg-white">
            <svg width="400" height="400" className="overflow-visible" fill="none" aria-label="Rotational spring drawing">
              <g transform="translate(0 140.500)">
                <path d="M-10 59.500H0M400 59.500H410" stroke="#35cf5d" strokeWidth="3" />
                <path d={COIL} stroke="#3fd268" strokeWidth="1.600" />
                <path d="M0 0H400M0 119H400M0 0V119M400 0V119M200 -19V-4" stroke="#66c2ff" strokeWidth="2" strokeDasharray="4 6" />
                <circle cx="200" cy="-23.500" r="4" fill="#fff" stroke="#66c2ff" strokeWidth="2" />
                {HANDLES.map(([x, y]) => (
                  <rect key={`${x}-${y}`} x={x - 3} y={y - 3} width="6" height="6" fill="#fff" stroke="#66c2ff" strokeWidth="2" />
                ))}
              </g>
            </svg>
          </div>
          <div className="absolute left-[224px] top-0 flex h-[34px] items-start border border-black bg-[#f5f5f5] pl-[3px] pr-[4px] pt-[4px]">
            <CanvasTool label="Select"><path d="M3 2.500L15 7.500L10.500 9L14.500 13.500L13 15L9 10.500L7.500 14.500Z" /></CanvasTool>
            <span className="w-[7px]" />
            <CanvasTool label="Edit points">
              <path d="M4 5V12M6 3.500H11" />
              <rect x="2.500" y="2" width="3.500" height="3.500" fill="#444" />
              <circle cx="14" cy="3.500" r="2" /><circle cx="4" cy="14" r="2" />
              <path d="M6 5.500L14 8.500L10.800 10L9.800 14Z" fill="#222" stroke="#222" strokeWidth=".6" />
            </CanvasTool>
            <span className="mx-[3px] mt-[2px] h-[20px] w-px bg-[#6f7d90]" />
            <CanvasTool label="Cut path">
              <path d="M3 2L12 11.500M15 2L6 11.500" strokeWidth="2" />
              <circle cx="4" cy="13.500" r="2.300" /><circle cx="14" cy="13.500" r="2.300" />
            </CanvasTool>
            <span className="w-[7px]" />
            <CanvasTool label="Add point">
              <path d="M9 3V10M5.500 6.500H12.500" stroke="#222" strokeWidth="1.200" />
              <circle cx="3.500" cy="12.500" r="2.300" /><circle cx="14.500" cy="12.500" r="2.300" />
              <path d="M7 12.500H11" strokeDasharray="1 1" />
            </CanvasTool>
          </div>
        </div>
      </div>
    </section>
  );
}

/* ---------- properties ---------- */

function Spinner({ id, name, value, disabled, className = "" }) {
  const edge = disabled ? "border-[#d4d4d4]" : "border-[#808080]";
  const arrow = disabled ? "text-[#cfcfcf]" : "text-[#595959]";
  return (
    <div className={`flex h-[22px] rounded-r-[6px] border bg-white ${edge} ${className}`}>
      <input
        id={id}
        aria-label={name}
        type="text"
        inputMode="decimal"
        defaultValue={value}
        disabled={disabled}
        className={`w-0 min-w-0 flex-1 bg-transparent px-[3px] text-right text-[12px] ${ARIAL} ${disabled ? "text-[#b8b8b8]" : "text-[#1a1a1a]"}`}
      />
      <div className={`flex w-[21px] flex-col rounded-r-[5px] ${disabled ? "bg-[#fafafa]" : "border-l border-[#808080] bg-[#f5f5f5]"}`}>
        <button type="button" aria-label={`Increase ${name}`} disabled={disabled} className={`flex flex-1 items-center justify-center ${disabled ? "" : "border-b border-[#808080]"}`}>
          <Tri dir="up" className={arrow} />
        </button>
        <button type="button" aria-label={`Decrease ${name}`} disabled={disabled} className="flex flex-1 items-center justify-center">
          <Tri className={arrow} />
        </button>
      </div>
    </div>
  );
}

function Drop({ id, name, text = "", disabled, children, className = "" }) {
  return (
    <div className={`relative flex ${className}`}>
      <select
        id={id}
        aria-label={name}
        disabled={disabled}
        className={`h-[23px] w-full appearance-none rounded-[6px] border pr-[20px] text-center text-[12px] leading-4 opacity-100 ${ARIAL} ${disabled ? "border-[#d4d4d4] bg-[#fafafa]" : "border-[#808080] bg-[#f5f5f5] text-[#1a1a1a]"}`}
      >
        <option>{text}</option>
      </select>
      {children && <span className="pointer-events-none absolute inset-y-0 left-0 right-[20px] flex items-center justify-center">{children}</span>}
      <span className="pointer-events-none absolute right-[6px] top-[9px] flex">
        <Tri className={disabled ? "text-[#c8c8c8]" : "text-[#595959]"} />
      </span>
    </div>
  );
}

function SectionTitle({ children }) {
  return (
    <h3 className="flex h-[29px] items-center border-b-2 border-[#c0c0c0] bg-[#f5f5f5] pl-[4px] text-[12px] leading-4 text-[#262626]">
      <Tri />
      <span className="ml-[5px]">{children}</span>
    </h3>
  );
}

function FormatRow({ label, htmlFor, children }) {
  return (
    <div className="flex h-[23px] items-center gap-[2px]">
      <label htmlFor={htmlFor} className="w-[70px] shrink-0 pt-[4px]">{label}</label>
      {children}
    </div>
  );
}

const swatch = <span className="ml-[4px] h-[17px] w-[52px] rounded-[5px] border border-[#d4d4d4] bg-[#fafafa]" />;
const dash = <span className="mr-[2px] mt-[1px] h-[2px] w-[7px] bg-black" />;

function Arrowhead({ flip }) {
  return (
    <svg width="15" height="12" className={flip ? "-scale-x-100" : ""} aria-hidden="true">
      <path d="M0 6L10.500 0V12Z" fill="#a6a6a6" /><path d="M10 6H15" stroke="#a6a6a6" strokeWidth="1.500" />
    </svg>
  );
}
function ArrowSizes({ flip }) {
  return (
    <svg width="16" height="14" className={flip ? "-scale-x-100" : ""} aria-hidden="true">
      <path d="M2 2H16M3 7H16M2 12.500H16" stroke="#999" strokeWidth="1.200" />
      <path d="M0 2L4 0V4ZM0 7L6 3.500V10.500ZM0 12.500H8L6 10Z" fill="#999" />
    </svg>
  );
}

function Collapsed({ title }) {
  return (
    <header className="flex h-[23px] shrink-0 items-center border-t border-[#808080] bg-white pl-[9px] pr-[10px]">
      <Tri dir="right" className="text-[#999]" />
      <h2 className={`ml-[10px] flex-1 text-[13px] leading-4 text-[#1a1a1a] ${ARIAL}`}>{title}</h2>
      <Dots label={`${title} menu`} />
    </header>
  );
}

function Properties() {
  return (
    <aside className="flex w-[300px] shrink-0 flex-col bg-[#f5f5f5]">
      <header className="flex h-[23px] shrink-0 items-center border-b border-[#bdbdbd] bg-white pl-[8px] pr-[10px] pt-px">
        <Tri className="text-[#a6a6a6]" />
        <h2 className={`ml-[8px] flex-1 text-[13px] leading-4 text-[#1a1a1a] ${ARIAL}`}>Element Properties</h2>
        <Dots label="Element Properties menu" />
      </header>
      <div className={`flex h-[22px] shrink-0 border-l border-[#c0c0c0] bg-[#e6e6e6] text-[12px] text-[#595959] ${ARIAL}`}>
        <button type="button" className="w-[65px] border-r border-[#bdbdbd] bg-white pl-[8px] text-left">Design</button>
        <button type="button" className="w-[67px] border-r border-[#bdbdbd] pl-[8px] text-left">Render</button>
      </div>
      <div className="shrink-0 border-2 border-b-1 border-[#c0c0c0] bg-white">
        <SectionTitle>Transform</SectionTitle>
        <div className="grid grid-cols-[34px_95px_12px_96px_16px] items-center gap-x-[6px] gap-y-[4px] py-[6px] text-[12px] leading-4 text-[#404040]">
          <label htmlFor="px" className="text-right">X</label>
          <Spinner id="px" name="X" value="0" />
          <label htmlFor="py" className="text-right">Y</label>
          <Spinner id="py" name="Y" value="140.5" />
          <span />
          <label htmlFor="pw" className="text-right">W</label>
          <Spinner id="pw" name="W" value="400" />
          <label htmlFor="ph" className="text-right">H</label>
          <Spinner id="ph" name="H" value="119" />
          <button type="button" aria-label="Lock aspect ratio" className="-ml-[4px]">
            <svg width="16" height="19" viewBox="0 0 16 19" fill="none" stroke="#3a3a3a" strokeWidth="2">
              <path d="M8.500 5C8 1 14.500 0 14.500 4.500C14.500 7 12.500 9 10 10.500" />
              <path d="M7.500 7.500C4 9.500 4 17.500 8 17.500C11.500 17.500 12 12 9.500 8" />
              <path d="M0 2.500L7 3.500M1 5.500L6 4.500" stroke="#777" strokeWidth="1" />
            </svg>
          </button>
          <label htmlFor="pr" aria-label="Rotation" className="-mr-[3px] flex justify-end">
            <svg width="16" height="13"><path d="M15.500 12.500H.5L12 .5M12 4C13.500 6 14 9 13.500 12" fill="none" stroke="#444" /></svg>
          </label>
          <Spinner id="pr" name="Rotation" value="0" />
          <span />
          <div className="col-span-2 flex gap-[5px]">
            <button type="button" aria-label="Flip horizontal" className="flex h-[22px] w-[47px] items-center justify-center rounded-[5px] border border-[#808080] bg-[#f5f5f5]"><FlipH /></button>
            <button type="button" aria-label="Flip vertical" className="flex h-[22px] w-[46px] items-center justify-center rounded-[5px] border border-[#808080] bg-[#f5f5f5]"><FlipV /></button>
          </div>
          <label htmlFor="pc" aria-label="Corner radius" className="-mr-[3px] flex justify-end">
            <svg width="14" height="14"><path d="M.5 4V.5H4M10 .5H13.500V4M13.500 10V13.500H10M4 13.500H.5V10" fill="none" stroke="#555" /></svg>
          </label>
          <Spinner id="pc" name="Corner radius" value="0" disabled />
        </div>
        <div className="border-t-2 border-[#c0c0c0]"><SectionTitle>Format</SectionTitle></div>
        <div className="flex flex-col gap-[2px] pb-[7px] pl-[20px] pt-[4px] text-[12px] leading-4 text-[#262626]">
          <FormatRow label="Fill" htmlFor="ff">
            <Drop id="ff" name="Fill color" disabled className="w-[96px]">{swatch}</Drop>
            <Spinner name="Fill opacity" value="" disabled className="w-[94px]" />
          </FormatRow>
          <FormatRow label="Stroke" htmlFor="fs">
            <Drop id="fs" name="Stroke color" disabled className="w-[96px]">{swatch}</Drop>
            <Spinner name="Stroke opacity" value="" disabled className="w-[94px]" />
          </FormatRow>
          <FormatRow label="Stroke style" htmlFor="fw">
            <Spinner id="fw" name="Stroke width" value="NaN" disabled className="mr-[2px] w-[94px]" />
            <Drop name="Dash style" className="w-[96px]"><span className="ml-[-2px] h-px w-[46px] bg-[#222]" /></Drop>
          </FormatRow>
          <FormatRow label="Cap type" htmlFor="fc"><Drop id="fc" name="Cap type" text="butt" className="w-[194px]" /></FormatRow>
          <FormatRow label="Join type" htmlFor="fj"><Drop id="fj" name="Join type" text="miter" className="w-[194px]" /></FormatRow>
          <FormatRow label="Start Type" htmlFor="fst">
            <Drop id="fst" name="Start type" className="w-[96px]">{dash}</Drop>
            <button type="button" disabled aria-label="Start arrow shape" className="flex h-[22px] w-[47px] items-center rounded-[5px] border border-[#d4d4d4] bg-[#fafafa] pl-[3px]"><Arrowhead /></button>
            <Drop name="Start arrow size" disabled className="w-[47px]"><span className="-ml-[6px]"><ArrowSizes /></span></Drop>
          </FormatRow>
          <FormatRow label="End Type" htmlFor="fet">
            <Drop id="fet" name="End type" className="w-[96px]">{dash}</Drop>
            <button type="button" disabled aria-label="End arrow shape" className="flex h-[22px] w-[47px] items-center rounded-[5px] border border-[#d4d4d4] bg-[#fafafa] pl-[3px]"><Arrowhead flip /></button>
            <Drop name="End arrow size" disabled className="w-[47px]"><span className="-ml-[6px]"><ArrowSizes flip /></span></Drop>
          </FormatRow>
        </div>
      </div>
      <div className="flex-1 border-x-2 border-x-[#dcdcdc]" />
      <Collapsed title="Element Dynamization" />
      <Collapsed title="Layout Constraints" />
      <div className="h-px bg-[#c0c0c0]" />
    </aside>
  );
}

/* ---------- status bar ---------- */

function Magnifier({ plus }) {
  return (
    <svg width="15" height="15" viewBox="0 0 15 15" fill="none" aria-hidden="true">
      <circle cx="6" cy="6" r="5" fill="#fff" stroke="#555" strokeWidth="1.200" />
      <path d="M9.800 9.800L14 14" stroke="#333" strokeWidth="2" />
      <path d={plus ? "M3.500 6H8.500M6 3.500V8.500" : "M3.500 6H8.500"} stroke="#111" strokeWidth="1.400" />
    </svg>
  );
}

function StatusBar() {
  return (
    <footer className={`flex h-[23px] shrink-0 border-t border-[#808080] bg-[#e6e6e6] text-[12px] leading-4 ${ARIAL}`}>
      <div className="flex w-[301px] items-center border-r border-[#808080] pl-[7px]">
        <button type="button" aria-label="Collapse left panel">
          <svg width="10" height="12"><path d="M0 0H2V12H0ZM9.500 1V11L3 6Z" fill="#969696" /></svg>
        </button>
      </div>
      <div className="flex min-w-0 flex-1 items-center justify-end border-r border-[#808080] pr-[13px]">
        <span className="text-[#a6a6a6]">X: 467 Y: 295</span>
        <span className="ml-[9px] h-[10px] w-px bg-[#b5b5b5]" />
        <button type="button" aria-label="Zoom out" className="ml-[9px]"><Magnifier /></button>
        <button type="button" aria-label="Zoom in" className="ml-[13px]"><Magnifier plus /></button>
        <span className="ml-[11px] text-[#1a1a1a]">100%</span>
        <button type="button" aria-label="Fit to view" className="ml-[8px]">
          <svg width="16" height="16">
            <rect x=".5" y=".5" width="15" height="15" fill="#fff" stroke="#8a8a8a" />
            <rect x="6" y="6" width="4" height="4" fill="#ccc" />
            <path d="M2 2H6L2 6ZM14 2H10L14 6ZM2 14H6L2 10ZM14 14H10L14 10Z" fill="#444" />
            <path d="M3 3L6.500 6.500M13 3L9.500 6.500M3 13L6.500 9.500M13 13L9.500 9.500" stroke="#555" />
          </svg>
        </button>
      </div>
      <div className="flex w-[300px] items-center justify-end pr-[6px]">
        <button type="button" aria-label="Collapse right panel">
          <svg width="9" height="12"><path d="M7 0H9V12H7ZM0 0V12L6.500 6Z" fill="#969696" /></svg>
        </button>
      </div>
    </footer>
  );
}

export default function App() {
  return (
    <div className="h-screen bg-[#c4c9cc]">
      <main className={`flex h-full flex-col overflow-hidden rounded-[8px] border border-[#a6a6a6] bg-[#f5f5f5] ${SEGOE}`}>
        <TitleBar />
        <TabStrip />
        <Ribbon />
        <div className="flex min-h-0 flex-1">
          <div className="flex w-[301px] shrink-0 flex-col border-r border-[#808080]">
            <ToolsPanel />
            <ElementBrowser />
          </div>
          <Canvas />
          <Properties />
        </div>
        <StatusBar />
      </main>
    </div>
  );
}
